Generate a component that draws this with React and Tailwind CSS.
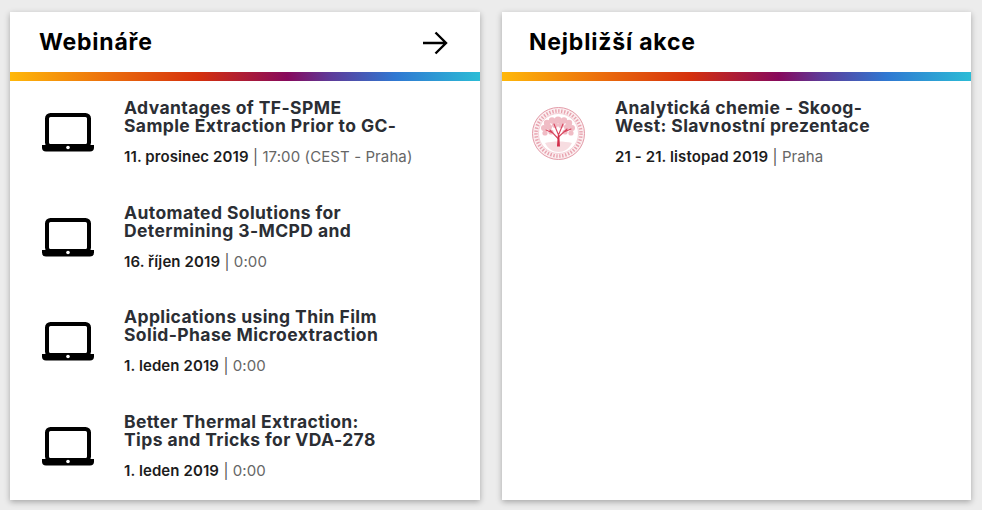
import React from 'react';

const webinars = [
  { lines: ['Advantages of TF-SPME', 'Sample Extraction Prior to GC-'], date: '11. prosinec 2019', rest: '17:00 (CEST - Praha)' },
  { lines: ['Automated Solutions for', 'Determining 3-MCPD and'], date: '16. říjen 2019', rest: '0:00' },
  { lines: ['Applications using Thin Film', 'Solid-Phase Microextraction'], date: '1. leden 2019', rest: '0:00' },
  { lines: ['Better Thermal Extraction:', 'Tips and Tricks for VDA-278'], date: '1. leden 2019', rest: '0:00' },
];

const LaptopIcon = () => (
  <svg viewBox="0 0 52 39" className="w-[52px] h-[39px] shrink-0 mt-[14px]">
    <rect x="5" y="2" width="42" height="31" rx="3.5" fill="none" stroke="#000" strokeWidth="4" />
    <path d="M0 32h52v2.5a4 4 0 0 1-4 4H4a4 4 0 0 1-4-4z" fill="#000" />
    <circle cx="26" cy="34.5" r="1.8" fill="#fff" />
  </svg>
);

// pale red university seal, blurry in the reference
const leaves = [
  [26, 13, 3.6], [20, 13.5, 3.2], [32, 13.5, 3.2], [15, 16, 3.2], [37, 16, 3.2], [12, 21, 3],
  [40, 21, 3], [17, 20, 3], [23, 18, 3], [29, 18, 3], [35, 20, 3], [13, 26, 2.6], [39, 26, 2.6],
  [19, 25, 2.6], [33, 25, 2.6],
];

const SealLogo = () => (
  <svg viewBox="0 0 53 53" className="w-[53px] h-[53px] shrink-0 mt-[8px]">
    <circle cx="26.5" cy="26.5" r="26" fill="#fbeef0" stroke="#e39aa7" strokeWidth="1" />
    <circle cx="26.5" cy="26.5" r="22.5" fill="none" stroke="#e8a3af" strokeWidth="3.5" strokeDasharray="1.4 1.6" />
    <circle cx="26.5" cy="26.5" r="20" fill="#fff" stroke="#eeb9c2" strokeWidth="0.6" />
    <g fill="#f0bcc5">
      {leaves.map(([x, y, r]) => <circle key={`${x}-${y}`} cx={x} cy={y} r={r} />)}
    </g>
    <path d="M13 36c8-2 19-2 27 0-3 6-8 9-13.5 9S16 42 13 36z" fill="#f7dde1" />
    <path d="M26.5 38V28M26.5 32L18 23M26.5 30L35 22M26.5 28L22 17M26.5 28L31 17M21 26l-7-3M32 25l7-3" fill="none" stroke="#d8455e" strokeWidth="1.1" strokeLinecap="round" />
    <path d="M25 39.5h3l-.7-11h-1.6z" fill="#d22f4b" />
  </svg>
);

const Item = ({ icon, lines, date, rest, pad, gap }) => (
  <div className={`flex h-[104.5px] ${pad} ${gap}`}>
    {icon}
    <div className="min-w-0">
      <h3 className="text-[17.5px] leading-[18px] font-bold text-[#2b2e34] tracking-[0.4px] whitespace-nowrap">
        {lines[0]}<br />{lines[1]}
      </h3>
      <p className="mt-[12px] text-[15px] leading-5 tracking-[0.1px] text-[#666] whitespace-nowrap">
        <span className="font-semibold text-[#1c1c1c]">{date}</span>
        <span className="text-[#555]"> | </span>
        {rest}
      </p>
    </div>
  </div>
);

const Card = ({ title, arrow, pad, children }) => (
  <section className="h-[488px] bg-white shadow-[0_2px_6px_rgba(0,0,0,0.3)] overflow-hidden">
    <header className={`flex h-[60px] items-center justify-between pt-[1px] ${pad} pr-[32px]`}>
      <h2 className="text-[23px] font-bold text-black tracking-[0.8px]">{title}</h2>
      {arrow && (
        <svg viewBox="0 0 26 24" className="w-[26px] h-[24px]" fill="none" stroke="#000" strokeWidth="2.4">
          <path d="M1 12h23M13.5 1.5L24 12 13.5 22.5" />
        </svg>
      )}
    </header>
    <div className="h-[9px] bg-[linear-gradient(90deg,#ffb80a_0%,#ea6a0c_22%,#d5300c_40%,#87095c_59%,#5e3a98_68%,#2f78d2_82%,#2bbcd6_100%)]" />
    <div className="pt-[18px]">{children}</div>
  </section>
);

export default function App() {
  return (
    <div className="h-[510px] overflow-hidden bg-[#ececec] font-['Inter','Liberation_Sans',sans-serif]">
      <div className="grid grid-cols-[470px_469px] gap-[22px] pl-[10px] pt-[12px]">
        <Card title="Webináře" arrow pad="pl-[29px]">
          {webinars.map((w, i) => (
            <Item key={i} icon={<LaptopIcon />} pad="pl-[32px]" gap="gap-[30px]" {...w} />
          ))}
        </Card>
        <Card title="Nejbližší akce" pad="pl-[27px]">
          <Item
            icon={<SealLogo />}
            pad="pl-[30px]"
            gap="gap-[30px]"
            lines={['Analytická chemie - Skoog-', 'West: Slavnostní prezentace']}
            date="21 - 21. listopad 2019"
            rest="Praha"
          />
        </Card>
      </div>
    </div>
  );
}
